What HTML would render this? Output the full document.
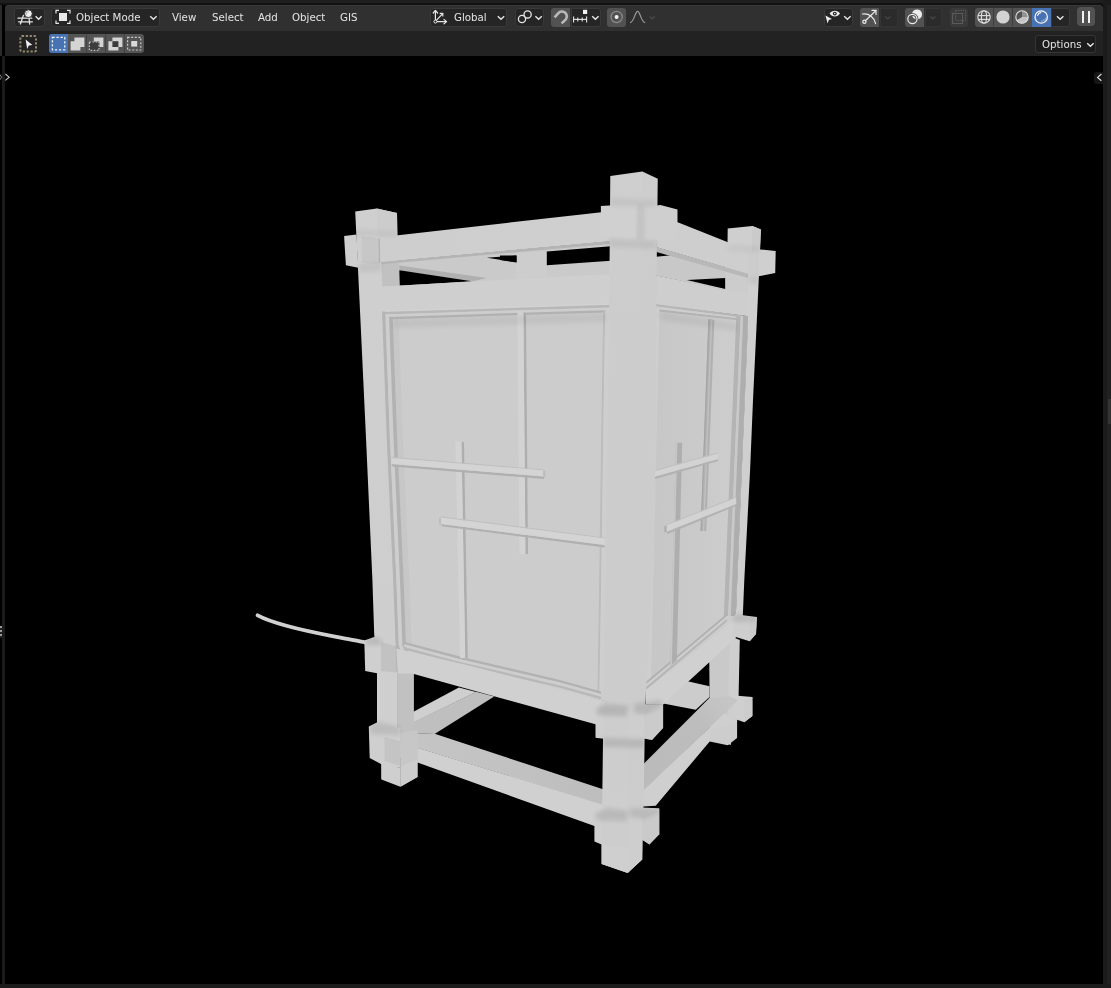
<!DOCTYPE html>
<html lang="en"><head><meta charset="utf-8"><title>Blender viewport</title>
<style>
html,body{margin:0;padding:0;background:#000;}
body{width:1111px;height:988px;overflow:hidden;font-family:"DejaVu Sans","Liberation Sans",sans-serif;font-size:11px;color:#e2e2e2;}
#app{position:relative;width:1111px;height:988px;background:#000;overflow:hidden;}
svg.scene{position:absolute;left:0;top:0;}
.abs{position:absolute;}
/* window chrome */
#topstrip{left:0;top:0;width:1111px;height:2.5px;background:#1f1f1f;}
#topline{left:0;top:2.5px;width:1111px;height:2.5px;background:#121212;}
#hdr{left:5px;top:4.5px;width:1098px;height:26px;background:#303030;border-radius:4px 4px 0 0;box-shadow:0 1px 0 #383838 inset;}
#hdr2{left:5px;top:30.5px;width:1098px;height:25.5px;background:#222222;}
#leftA{left:0;top:5px;width:2px;height:51px;background:#2a2a2a;}
#leftB{left:2px;top:56px;width:3px;height:929px;background:#1b1b1b;}
#rightA{left:1103px;top:0;width:8px;height:988px;background:#1b1b1b;}
#rightB{left:1107px;top:5px;width:4px;height:983px;background:#212121;}
#rightC{left:1108px;top:399px;width:3px;height:25px;background:#343434;}
#bottomA{left:0;top:984px;width:1111px;height:4px;background:#1c1c1c;}
#vp{left:5px;top:56px;width:1098px;height:928px;border-radius:0 0 4px 4px;background:#000;}
/* header widgets */
.btn{position:absolute;top:7.5px;height:19px;border-radius:3px;background:#252525;box-shadow:0 0 0 1px #393939 inset;}
.btn.lt{background:#525252;box-shadow:none;}
.btn.blue{background:#4772b3;box-shadow:none;}
.t{position:absolute;white-space:nowrap;line-height:13px;font-size:11px;color:#e4e4e4;letter-spacing:0;transform:scaleX(0.93);transform-origin:0 0;}
.ic{position:absolute;overflow:visible;}
.btn.dim{background:#2b2b2b;box-shadow:0 0 0 1px #343434 inset;}

</style></head>
<body>
<div id="app">
<svg class="scene" width="1111" height="988" viewBox="0 0 1111 988">
<defs>
<filter id="soft" x="-5%" y="-5%" width="110%" height="110%"><feGaussianBlur stdDeviation="0.7"/></filter>
<filter id="aoblur" x="-5%" y="-5%" width="110%" height="110%"><feGaussianBlur stdDeviation="2.2"/></filter>

<linearGradient id="gGapL" x1="0" y1="0" x2="0" y2="1"><stop offset="0" stop-color="#cccccc"/><stop offset="1" stop-color="#b8b8b8"/></linearGradient>
<linearGradient id="gGapR" x1="0" y1="0" x2="0" y2="1"><stop offset="0" stop-color="#cacaca"/><stop offset="1" stop-color="#b9b9b9"/></linearGradient>
<linearGradient id="gPostL" x1="0" y1="0" x2="0" y2="1"><stop offset="0" stop-color="#cfcfcf"/><stop offset="1" stop-color="#cecece"/></linearGradient>
<linearGradient id="gPostC" x1="0" y1="0" x2="0" y2="1"><stop offset="0" stop-color="#cfcfcf"/><stop offset="0.2" stop-color="#cccccc"/><stop offset="0.75" stop-color="#cccccc"/><stop offset="1" stop-color="#cfcfcf"/></linearGradient>
<linearGradient id="gBeamF" x1="0" y1="0" x2="1" y2="0"><stop offset="0" stop-color="#cecece"/><stop offset="1" stop-color="#cfcfcf"/></linearGradient>
<linearGradient id="gPaperL" x1="0" y1="0" x2="0" y2="1"><stop offset="0" stop-color="#cdcdcd"/><stop offset="1" stop-color="#cbcbcb"/></linearGradient>
<linearGradient id="gLowF" gradientUnits="userSpaceOnUse" x1="400" y1="0" x2="603" y2="0"><stop offset="0" stop-color="#c5c5c5"/><stop offset="0.5" stop-color="#c2c2c2"/><stop offset="1" stop-color="#bdbdbd"/></linearGradient>
<linearGradient id="gLowR" gradientUnits="userSpaceOnUse" x1="650" y1="770" x2="725" y2="700"><stop offset="0" stop-color="#bbbbbb"/><stop offset="0.65" stop-color="#bdbdbd"/><stop offset="1" stop-color="#c5c5c5"/></linearGradient>
<linearGradient id="gPaperR" x1="0" y1="0" x2="1" y2="0"><stop offset="0" stop-color="#c6c6c6"/><stop offset="1" stop-color="#cecece"/></linearGradient>
</defs><g filter="url(#soft)">
<polygon points="381,262 611,241 611,275 382,287" fill="#cacaca"/>
<polygon points="399.4,265.6 487,278 472.2,281.4 399.4,270.6" fill="#b0b0b0"/>
<polygon points="516.5,253 547,251.5 547,277 516.5,279" fill="#cdcdcd"/>
<polygon points="399.4,270.2 472,281.2 399.4,285.8" fill="#000"/>
<polygon points="486.8,257.8 516.5,255.6 516.5,262.3" fill="#000"/>
<polygon points="546.8,251.6 611,246.2 611,260.8 546.8,265.3" fill="#000"/>
<polygon points="500,255.4 516.5,255.4 516.5,262.6 500,259.9" fill="#000"/>
<polygon points="656,247 748,273.6 748,295 656,275.5" fill="#c8c8c8"/>
<polygon points="686.7,279.9 725.4,278.1 725.4,288.9" fill="#000"/>
<polygon points="656,250.2 674,254.9 656,256.7" fill="#000"/>
<polygon points="725.4,262 748,262 748,296 725.4,292" fill="#cccccc"/>
<polygon points="687.6,681.3 709.5,686.3 709.5,697.1 695.7,709.7 663.2,703.4" fill="#cccccc"/>
<polygon points="413,712 458.9,687.4 476,692 413,723" fill="#cfcfcf"/>
<polygon points="413,722.5 476,691.8 494.2,696.5 434.6,734 413,733" fill="#bfbfbf"/>
<polygon points="709.2,655 709.2,640 731,636 731,745 710,738" fill="#c9c9c9"/>
<polygon points="730,636 739.8,640 738.5,700 737.1,722 737.1,738 728.1,744.9 728.1,700" fill="#cecece"/>
<polygon points="731.7,695.3 752.4,697.1 752.4,716 744.3,722.3 735,719" fill="#cfcfcf"/>
<polygon points="744.3,700 752.4,697.1 752.4,716 744.3,722.3" fill="#cccccc"/>
<polygon points="643,764.5 709.4,698.1 729,696.3 738,700 724.5,713.6 643,790.8" fill="url(#gLowR)"/>
<polygon points="643,790.2 724.3,713.4 737,720.5 737,724 709.7,741.5 655.7,805.8 643,806.5" fill="#cfcfcf"/>
<polygon points="709.7,741.5 711,730 737,722 736.8,737 727.7,745.3" fill="#cdcdcd"/>
<polygon points="398,732.5 434.6,733.7 603,789.2 603,805 398,742" fill="url(#gLowF)"/>
<polygon points="398,741.8 603,804.6 603,828.5 594.4,826 417.5,762.5 398,757" fill="#d0d0d0"/>
<polygon points="355.2,211.6 376.8,208.6 397,213.1 397.5,240 399.4,286 398,650 397.7,673 397.7,742 381.4,779.6 381.4,764 377,724 377,673 374.2,634 372.4,580 366.1,440 359.5,300" fill="url(#gPostL)"/>
<polygon points="376.8,208.6 397,213.1 397.3,238 377.5,240" fill="#cccccc"/>
<polygon points="377,672 397.7,672 397.7,745 381,745 377,724" fill="#cfcfcf"/>
<polygon points="397.7,672 413.9,673.5 413.9,727 417.5,745 417.5,776.9 400.4,786.8 400.4,745 397.7,742" fill="#c1c1c1"/>
<polygon points="381.4,762 400.4,768 400.4,786.8 381.4,779.6" fill="#cfcfcf"/>
<polygon points="400.4,766 417.5,759 417.5,776.9 400.4,786.8" fill="#cdcdcd"/>
<polygon points="344.1,236 356.5,234.4 358.3,267.7 345.9,265.3" fill="#cfcfcf"/>
<polygon points="361.5,236 378.5,238.5 379,264.5 362,262.5" fill="#c4c4c4" opacity="0.8"/>
<line x1="379.2" y1="239.0" x2="379.6" y2="263.0" stroke="#b4b4b4" stroke-width="1.40"/>
<polygon points="364.3,640.4 374,637 381,640 381,674 365.2,671" fill="#cfcfcf"/>
<polygon points="381,642 396,646 397,672.5 381,671" fill="#c0c0c0" opacity="0.85"/>
<line x1="396.4" y1="646.0" x2="397.4" y2="672.0" stroke="#b2b2b2" stroke-width="1.80"/>
<polygon points="368.8,726.5 377.8,722 400.4,728 400.4,768 381.4,764.3 369.7,758" fill="#cfcfcf"/>
<polygon points="384.5,737 400.4,741 400.4,766 384.5,761" fill="#c2c2c2" opacity="0.85"/>
<polygon points="400.4,733 417.5,730 417.5,759 400.4,766" fill="#c7c7c7"/>
<polygon points="381.4,262 398.8,263 399.4,286 382.3,287" fill="#c1c1c1"/>
<polygon points="380.5,237.2 601.5,212.2 611,211.2 611,241.2 381.4,262.3" fill="url(#gBeamF)"/>
<polygon points="381.4,262.1 611,241.1 611,243.9 381.4,264.3" fill="#b4b4b4"/>
<polygon points="672,221.5 677.7,222.2 748,250.2 748,273.8 656.5,247.3 656.5,240" fill="#cecece"/>
<polygon points="656.5,247.3 748,273.8 748,278 656.5,252" fill="#b8b8b8"/>
<polygon points="383,308 613,303 608,702 397.7,651" fill="#cccccc"/>
<polygon points="392.5,311.0 397.2,440.0 403.6,580.0 406.0,645.0 408.1,651.0 413.7,651.0 411.6,645.0 409.2,580.0 402.8,440.0 398.1,311.0" fill="#c2c2c2" opacity="0.5"/>
<polygon points="382.3,286.4 613,273.8 613,304.2 383.2,311.2" fill="#cfcfcf"/>
<polygon points="382.5,310.4 613.0,303.2 613.0,304.8 382.5,312.0" fill="#d2d2d2"/>
<polygon points="382.5,312.0 613.0,304.8 613.0,307.4 382.5,314.6" fill="#b8b8b8"/>
<polygon points="382.5,314.6 613.0,307.4 613.0,310.0 382.5,317.2" fill="#cecece"/>
<polygon points="382.5,317.2 613.0,310.0 613.0,312.2 382.5,319.4" fill="#b4b4b4"/>
<polygon points="382.1,311.6 386.8,440.0 393.2,580.0 395.6,645.0 397.7,651.0 400.9,651.0 398.8,645.0 396.4,580.0 390.0,440.0 385.3,311.6" fill="#b4b4b4"/>
<polygon points="385.4,314.3 390.0,440.0 396.4,580.0 398.8,645.0 400.9,651.0 404.5,651.0 402.4,645.0 400.0,580.0 393.6,440.0 389.0,314.3" fill="#cecece"/>
<polygon points="389.1,316.8 393.6,440.0 400.0,580.0 402.4,645.0 404.5,651.0 408.1,651.0 406.0,645.0 403.6,580.0 397.2,440.0 392.7,316.8" fill="#b2b2b2"/>
<polygon points="603.2,310.0 601.8,400.0 600.1,520.0 597.5,694.0 599.5,694.0 602.1,520.0 603.8,400.0 605.2,310.0" fill="#bcbcbc"/>
<polygon points="605.2,310.0 603.8,400.0 602.1,520.0 599.5,694.0 604.4,694.0 607.0,520.0 608.7,400.0 610.1,310.0" fill="#cecece"/>
<polygon points="404.0,641.7 459.1,656.3 560.0,680.0 601.0,691.4 601.0,694.0 560.0,682.6 459.1,658.9 404.0,644.3" fill="#b2b2b2"/>
<polygon points="404.0,644.3 459.1,658.9 560.0,682.6 601.0,694.0 601.0,696.8 560.0,685.4 459.1,661.7 404.0,647.1" fill="#cecece"/>
<polygon points="404.0,647.1 459.1,661.7 560.0,685.4 601.0,696.8 601.0,699.2 560.0,687.8 459.1,664.1 404.0,649.5" fill="#b8b8b8"/>
<polygon points="396.3,648.4 474.9,667 607,701.4 607,727 595.5,724.3 413.9,673.9 397.7,673.3" fill="#d0d0d0"/>
<polygon points="523.4,312.0 526.0,313.0 528.0,554.0 525.4,554.0" fill="#aeaeae"/>
<polygon points="517.4,312.0 523.4,312.0 525.4,554.0 519.4,554.0" fill="#d3d3d3"/>
<polygon points="461.4,441.4 464.0,442.4 467.8,658.0 465.2,658.0" fill="#aeaeae"/>
<polygon points="455.4,441.4 461.4,441.4 465.2,658.0 460.0,658.0" fill="#d3d3d3"/>
<polygon points="391.4,456.8 544.1,469.4 544.1,470.6 391.4,458.0" fill="#c0c0c0"/>
<polygon points="391.4,464.0 544.1,476.6 544.1,479.0 392.4,466.4" fill="#b0b0b0"/>
<polygon points="391.4,458.0 544.1,470.6 544.1,476.6 391.4,464.0" fill="#d4d4d4"/>
<polygon points="440.9,516.3 604.5,537.4 604.5,538.6 440.9,517.5" fill="#c0c0c0"/>
<polygon points="440.9,523.9 604.5,545.0 604.5,547.4 441.9,526.3" fill="#b0b0b0"/>
<polygon points="440.9,517.5 604.5,538.6 604.5,545.0 440.9,523.9" fill="#d4d4d4"/>
<polygon points="543.2,470.6 545.2,470.9 545.2,477.4 543.2,476.6" fill="#bababa"/>
<polygon points="440.9,517.5 439,518.2 439,524.6 440.9,523.9" fill="#bcbcbc"/>
<polygon points="655.0,303.0 748.2,316.5 743.0,440.0 736.4,600.0 735.3,626.0 646.0,692.0 650.0,600.0 654.0,440.0" fill="url(#gPaperR)"/>
<polygon points="655.9,275.2 748,294.3 748,316.2 655.1,304.2" fill="#cecece"/>
<polygon points="654.6,304.0 747.7,316.1 747.7,318.3 654.6,306.2" fill="#b6b6b6"/>
<polygon points="654.6,306.2 747.7,318.3 747.7,321.1 654.6,309.0" fill="#cecece"/>
<polygon points="654.6,309.0 747.7,319.3 747.7,321.3 654.6,311.0" fill="#b4b4b4"/>
<polygon points="736.3,316.0 731.1,440.0 723.8,616.0 728.2,616.0 735.5,440.0 740.7,316.0" fill="#b4b4b4"/>
<polygon points="740.7,316.0 735.5,440.0 728.2,616.0 730.7,616.0 738.0,440.0 743.2,316.0" fill="#c9c9c9"/>
<polygon points="743.2,316.0 738.0,440.0 730.7,616.0 735.9,616.0 743.2,440.0 748.4,316.0" fill="#aeaeae"/>
<polygon points="654,308 659.5,309 651,683 645,692 649,600 653,440" fill="#cecece"/>
<polygon points="646.0,681.8 727.0,613.5 727.0,615.9 646.0,684.2" fill="#b0b0b0"/>
<polygon points="646.0,684.2 727.0,615.9 727.0,618.9 646.0,687.2" fill="#cdcdcd"/>
<polygon points="646.0,687.2 727.0,618.9 727.0,621.3 646.0,689.6" fill="#b4b4b4"/>
<polygon points="646,690 731.3,621.8 735.6,621 735.8,638 663,704.7 646,704.5" fill="#d0d0d0"/>
<polygon points="708.4,319 714.4,320 706.2,531 700.6,531" fill="#b0b0b0"/>
<line x1="708.9" y1="319.5" x2="701.0" y2="531.0" stroke="#a4a4a4" stroke-width="1.00"/>
<line x1="711.6" y1="320.0" x2="703.6" y2="531.0" stroke="#c0c0c0" stroke-width="1.40"/>
<polygon points="675.9,442.7 682.2,442.7 676.8,660.5 670.2,666" fill="#aeaeae"/>
<line x1="676.6" y1="442.7" x2="671.0" y2="665.0" stroke="#c7c7c7" stroke-width="1.60"/>
<polygon points="650.6,471.2 718.2,452.3 718.2,453.5 650.6,472.4" fill="#c0c0c0"/>
<polygon points="650.6,477.8 718.2,458.9 718.2,461.1 651.6,480.0" fill="#b2b2b2"/>
<polygon points="650.6,472.4 718.2,453.5 718.2,458.9 650.6,477.8" fill="#d3d3d3"/>
<polygon points="666.5,524.4 736.2,496.5 736.2,497.7 666.5,525.6" fill="#c0c0c0"/>
<polygon points="666.5,531.8 736.2,503.9 736.2,506.1 667.5,534.0" fill="#b2b2b2"/>
<polygon points="666.5,525.6 736.2,497.7 736.2,503.9 666.5,531.8" fill="#d3d3d3"/>
<polygon points="666.5,525.6 664.4,526 664.4,532.6 666.5,531.8" fill="#acacac"/>
<polygon points="727.7,228.6 752.4,225.9 760.9,229.5 759.6,262 757.8,300 753,400 750.1,470 744.3,580 742.8,616 735.8,616 736.4,600 743,440 748,320 748,251 727.4,251" fill="#cfcfcf"/>
<polygon points="752.4,225.9 760.9,229.5 759.8,252 752,251" fill="#cacaca"/>
<polygon points="758.7,249.3 775.7,251 775.2,273 758.7,276.3" fill="#cfcfcf"/>
<polygon points="748,250 759,250.2 759,276.3 748,274" fill="#cccccc"/>
<polygon points="732.6,618.7 735.3,614.2 756.9,616.9 756,634 749.7,641.3 732.6,635.9" fill="#cecece"/>
<polygon points="749.7,620.5 756.9,616.9 756,634 749.7,641.3" fill="#cbcbcb"/>
<polygon points="610.3,176.1 642.3,171.6 657.7,178.8 655.9,328 655,478 651,600 646,690 644.5,740 644,780 642.2,859.5 627.7,873.1 601.6,864 601.6,844 602.5,780 603,740 603.6,690 606.3,520 608,400 609,328" fill="url(#gPostC)"/>
<polygon points="642.3,171.6 657.7,178.8 655.9,328 655,478 651,600 646,690 644,780 642.2,859.5 627.7,873.1 627.7,780 633,600 638,400 641,300" fill="#cbcbcb" opacity="0.25"/>
<polygon points="600.9,205.9 637.8,203.7 636,238.8 600.9,235.8" fill="#d0d0d0"/>
<polygon points="637.8,203.7 644.1,207.3 644.1,239.2 636,238.8" fill="#cccccc"/>
<polygon points="644.1,207.3 660.4,205 677.5,209.5 677.5,222 673,241 644.1,239.2" fill="#cfcfcf"/>
<polygon points="595.5,710 603.6,704.5 628,709.5 628,742 603.6,738.8 595.5,737.7" fill="#cfcfcf"/>
<polygon points="603.6,712 628,716 628,742 603.6,738.8" fill="#cccccc" opacity="0.7"/>
<polygon points="628,709.5 634.2,704.3 663.1,704.3 663.1,728 652,739.9 644.1,738.6 628,742" fill="#cecece"/>
<polygon points="644.1,712 663.1,706 663.1,728 652,739.9 644.1,738.6" fill="#cacaca" opacity="0.6"/>
<polygon points="594.4,814.5 607,808.2 628,812 628,848 601.6,844.4 594.4,841.5" fill="#cfcfcf"/>
<polygon points="601.6,818 628,822 628,848 601.6,844.4" fill="#cccccc" opacity="0.7"/>
<polygon points="628,812 634,807.3 659.3,808.2 659.3,834.3 649.4,844.4 642.2,839.7 628,848" fill="#cecece"/>
<polygon points="642.2,816 659.3,810 659.3,834.3 649.4,844.4 642.2,839.7" fill="#c9c9c9" opacity="0.7"/>
<polygon points="601.6,844.2 627.7,848 627.7,873.1 601.6,864" fill="#cfcfcf"/>
<polygon points="627.7,848 642.2,839.7 642.2,859.5 627.7,873.1" fill="#cecece"/>
<path d="M257.6,615.4 C270,622 300,630 333.7,636.3 S358,641 365,642.3" fill="none" stroke="#d1d1d1" stroke-width="3.9" stroke-linecap="round"/>
</g>
<g filter="url(#aoblur)">
<polygon points="611,198 656,200 656,207 611,206" fill="#000" opacity="0.05"/>
<polygon points="637,204 645,206 645,240 637,240" fill="#000" opacity="0.04"/>
<polygon points="609,239 656,241 656,249 609,247" fill="#000" opacity="0.06"/>
<polygon points="356,229 397,231 397,237 356,236" fill="#000" opacity="0.04"/>
<polygon points="358,264 381,263 381,271 358,272" fill="#000" opacity="0.06"/>
<polygon points="728,245 760,246 760,252 728,251" fill="#000" opacity="0.04"/>
<polygon points="749,276 759,277 759,284 749,283" fill="#000" opacity="0.06"/>
<polygon points="596,709 604,704 628,706 627,716 598,715" fill="#000" opacity="0.12"/>
<polygon points="634,704 661,700 663,705 646,714 634,713" fill="#000" opacity="0.11"/>
<polygon points="595,814 607,808 628,811 627,821 597,820" fill="#000" opacity="0.10"/>
<polygon points="630,808 659,808 659,812 644,819 630,817" fill="#000" opacity="0.09"/>
<polygon points="365,640 374,637 381,639 381,645 366,645" fill="#000" opacity="0.10"/>
<polygon points="369,727 378,722 400,727 400,735 371,734" fill="#000" opacity="0.09"/>
<polygon points="733,618 736,614 757,617 756,621 734,622" fill="#000" opacity="0.10"/>
<polygon points="603,738 644,739 644,748 603,747" fill="#000" opacity="0.10"/>
<polygon points="394,319 606,313 606,322 394,328" fill="#000" opacity="0.05"/>
<polygon points="660,312 737,323 737,331 660,320" fill="#000" opacity="0.05"/>
</g></svg>
<!-- window chrome -->
<div class="abs" id="topstrip"></div>
<div class="abs" id="topline"></div>
<div class="abs" id="hdr"></div>
<div class="abs" id="hdr2"></div>
<div class="abs" id="leftA"></div>
<div class="abs" id="leftB"></div>
<div class="abs" id="rightA"></div>
<div class="abs" id="rightB"></div>
<div class="abs" id="rightC"></div>
<div class="abs" id="bottomA"></div>

<!-- ROW 1 : editor type -->
<div class="btn" style="left:14px;width:31px;"></div>
<svg class="ic" style="left:14px;top:8px" width="31" height="18" viewBox="14 8 31 18">
  <g stroke="#e6e6e6" stroke-width="1.3" fill="none" stroke-linecap="round">
    <line x1="18" y1="18.2" x2="31.8" y2="18.2"/><line x1="18.6" y1="21.8" x2="32.4" y2="21.8"/>
    <line x1="23.4" y1="15.4" x2="20.4" y2="24"/><line x1="29" y1="17" x2="29.6" y2="24"/>
  </g>
  <circle cx="28.4" cy="13.7" r="3.9" fill="#eeeeee" stroke="#262626" stroke-width="0.9"/>
  <path d="M26.2,14.6 A2.6,2.6 0 0 1 28.6,11.6" stroke="#9a9a9a" stroke-width="0.9" fill="none"/>
  <polyline points="35.6,16.2 38.6,19.2 41.6,16.2" stroke="#e6e6e6" stroke-width="1.4" fill="none"/>
</svg>

<!-- object mode dropdown -->
<div class="btn" style="left:51px;width:109px;"></div>
<svg class="ic" style="left:51px;top:8px" width="24" height="18" viewBox="51 8 24 18">
  <g stroke="#e6e6e6" stroke-width="1.2" fill="none">
    <polyline points="59,10.4 56,10.4 56,13.4"/><polyline points="67,10.4 70,10.4 70,13.4"/>
    <polyline points="56,20.4 56,23.4 59,23.4"/><polyline points="70,20.4 70,23.4 67,23.4"/>
  </g>
  <rect x="59" y="13" width="8" height="8" fill="#e8e8e8"/>
</svg>
<div class="t" style="left:76px;top:10.7px;">Object Mode</div>
<svg class="ic" style="left:148px;top:8px" width="12" height="18" viewBox="148 8 12 18"><polyline points="150.2,16.2 153.4,19.3 156.6,16.2" stroke="#e6e6e6" stroke-width="1.4" fill="none"/></svg>

<!-- menus -->
<div class="t" style="left:172px;top:10.7px;">View</div>
<div class="t" style="left:212px;top:10.7px;">Select</div>
<div class="t" style="left:258px;top:10.7px;">Add</div>
<div class="t" style="left:292px;top:10.7px;">Object</div>
<div class="t" style="left:340px;top:10.7px;">GIS</div>

<!-- orientation -->
<div class="btn" style="left:430px;width:77px;"></div>
<svg class="ic" style="left:430px;top:8px" width="20" height="18" viewBox="430 8 20 18">
  <g stroke="#e6e6e6" stroke-width="1.2" fill="none" stroke-linecap="round" stroke-linejoin="round">
    <line x1="435.4" y1="20.4" x2="435.4" y2="11"/><polyline points="433.2,13 435.4,10.4 437.6,13"/>
    <line x1="436.6" y1="21.6" x2="446" y2="21.6"/><polyline points="444,19.4 446.6,21.6 444,23.8"/>
    <line x1="436.4" y1="20.4" x2="442.6" y2="13.6"/><polyline points="440.2,13.4 442.8,13.4 442.8,16"/>
  </g>
  <circle cx="435.4" cy="21.6" r="1.5" fill="#262626" stroke="#e6e6e6" stroke-width="1"/>
</svg>
<div class="t" style="left:454px;top:10.7px;">Global</div>
<svg class="ic" style="left:495px;top:8px" width="12" height="18" viewBox="495 8 12 18"><polyline points="497.8,16.2 501,19.3 504.2,16.2" stroke="#e6e6e6" stroke-width="1.4" fill="none"/></svg>

<!-- pivot -->
<div class="btn" style="left:515px;width:29px;"></div>
<svg class="ic" style="left:515px;top:8px" width="29" height="18" viewBox="515 8 29 18">
  <g stroke="#e6e6e6" stroke-width="1.3" fill="none">
    <circle cx="522" cy="19" r="3.6"/><circle cx="527.6" cy="14.4" r="3.6"/>
  </g>
  <polyline points="535.4,16.2 538.6,19.3 541.8,16.2" stroke="#e6e6e6" stroke-width="1.4" fill="none"/>
</svg>

<!-- snap -->
<div class="btn lt" style="left:551px;width:19px;border-radius:3px 0 0 3px;"></div>
<svg class="ic" style="left:551px;top:8px" width="19" height="18" viewBox="551 8 19 18">
  <path d="M554.6,17.4 L558.4,13.2 A4.6,4.6 0 0 1 565.6,19.6 L561.6,23.4" stroke="#b9b9b9" stroke-width="2.6" fill="none"/>
  <path d="M556.4,19.2 L560,15.2 A2.3,2.3 0 0 1 563.6,18.2 L559.8,22" stroke="#4e4e4e" stroke-width="0.9" fill="none"/>
</svg>
<div class="btn" style="left:571px;width:30px;border-radius:0 3px 3px 0;"></div>
<svg class="ic" style="left:571px;top:8px" width="30" height="18" viewBox="571 8 30 18">
  <g stroke="#e6e6e6" stroke-width="1.1" fill="none">
    <line x1="573.4" y1="19.4" x2="587" y2="19.4"/>
    <line x1="573.6" y1="16.6" x2="573.6" y2="22.4"/><line x1="577.8" y1="17.4" x2="577.8" y2="21.6"/>
    <line x1="582.2" y1="17.4" x2="582.2" y2="21.6"/><line x1="586.6" y1="16.6" x2="586.6" y2="22.4"/>
  </g>
  <rect x="583" y="9.8" width="4.2" height="4.2" fill="#f0f0f0"/>
  <polyline points="592.2,16.2 595.4,19.3 598.6,16.2" stroke="#e6e6e6" stroke-width="1.4" fill="none"/>
</svg>

<!-- proportional -->
<div class="btn lt" style="left:607px;width:19px;"></div>
<svg class="ic" style="left:607px;top:8px" width="52" height="18" viewBox="607 8 52 18">
  <circle cx="616.6" cy="17" r="5.6" stroke="#8c8c8c" stroke-width="1.2" fill="none"/>
  <circle cx="616.6" cy="17" r="2" fill="#f2f2f2"/>
  <path d="M630,22.6 C634,22.6 635,11.4 637.6,11.4 C640.2,11.4 641.2,22.6 645.2,22.6" stroke="#9a9a9a" stroke-width="1.2" fill="none"/>
  <polyline points="649.6,16.4 652.2,18.8 654.8,16.4" stroke="#4a4a4a" stroke-width="1.3" fill="none"/>
</svg>

<!-- visibility -->
<div class="btn" style="left:824px;width:29px;"></div>
<svg class="ic" style="left:824px;top:8px" width="29" height="18" viewBox="824 8 29 18">
  <path d="M829.6,13.6 C832,9.8 837.6,9.8 840,13.6 C837.6,17.4 832,17.4 829.6,13.6 Z" fill="#ececec"/>
  <circle cx="834.8" cy="13.6" r="1.9" fill="#1c1c1c"/><circle cx="834.8" cy="13.6" r="0.8" fill="#ececec"/>
  <path d="M825.4,15.6 L832,19 L828.8,20 L827.6,23.6 Z" fill="#ececec"/>
  <polyline points="844.2,16.2 847.4,19.3 850.6,16.2" stroke="#e6e6e6" stroke-width="1.4" fill="none"/>
</svg>

<!-- gizmo -->
<div class="btn lt" style="left:860px;width:19px;border-radius:3px 0 0 3px;"></div>
<div class="btn dim" style="left:880px;width:18px;border-radius:0 3px 3px 0;"></div>
<svg class="ic" style="left:860px;top:8px" width="38" height="18" viewBox="860 8 38 18">
  <g stroke="#ececec" stroke-width="1.2" fill="none" stroke-linecap="round">
    <path d="M862.4,14 C869,13 874,17 875.6,23.6"/>
    <line x1="865.4" y1="20.8" x2="875.8" y2="10.6"/><polyline points="872,10.4 876,10.4 876,14.4"/>
    <circle cx="864.4" cy="21.8" r="1.6"/>
  </g>
  <polyline points="885.2,16.4 887.8,18.8 890.4,16.4" stroke="#454545" stroke-width="1.3" fill="none"/>
</svg>

<!-- overlay -->
<div class="btn lt" style="left:905px;width:19px;border-radius:3px 0 0 3px;"></div>
<div class="btn dim" style="left:925px;width:17px;border-radius:0 3px 3px 0;"></div>
<svg class="ic" style="left:905px;top:8px" width="38" height="18" viewBox="905 8 38 18">
  <circle cx="917" cy="14.4" r="5" fill="#ececec"/>
  <circle cx="912.4" cy="19" r="4.6" stroke="#525252" stroke-width="3" fill="none"/>
  <circle cx="912.4" cy="19" r="4.6" stroke="#ececec" stroke-width="1.2" fill="none"/>
  <polyline points="930.2,16.4 932.8,18.8 935.4,16.4" stroke="#454545" stroke-width="1.3" fill="none"/>
</svg>

<!-- xray -->
<div class="btn" style="left:950px;width:18px;background:#3a3a3a;box-shadow:none;"></div>
<svg class="ic" style="left:950px;top:8px" width="18" height="18" viewBox="950 8 18 18">
  <g stroke="#5e5e5e" stroke-width="1" fill="none"><rect x="952.6" y="13.4" width="10" height="10"/><rect x="955.6" y="10.4" width="10" height="10" stroke-dasharray="1.4 1"/></g>
</svg>

<!-- shading -->
<div class="btn lt" style="left:975px;width:57px;border-radius:3px 0 0 3px;"></div>
<div class="abs" style="left:993px;top:8px;width:1px;height:18px;background:#3c3c3c;"></div>
<div class="abs" style="left:1012px;top:8px;width:1px;height:18px;background:#3c3c3c;"></div>
<div class="btn blue" style="left:1032px;width:19px;border-radius:0;"></div>
<div class="btn" style="left:1051px;width:19px;border-radius:0 3px 3px 0;"></div>
<svg class="ic" style="left:975px;top:8px" width="95" height="18" viewBox="975 8 95 18">
  <g stroke="#e0e0e0" stroke-width="1.1" fill="none">
    <circle cx="984" cy="17" r="6.2"/><ellipse cx="984" cy="17" rx="2.6" ry="6.2"/><line x1="977.8" y1="15.6" x2="990.2" y2="15.6"/><line x1="978.2" y1="19.4" x2="989.8" y2="19.4"/>
  </g>
  <circle cx="1003" cy="17" r="6.6" fill="#d2d2d2"/>
  <circle cx="1022" cy="17" r="6.2" stroke="#e0e0e0" stroke-width="1.1" fill="none"/>
  <path d="M1022,17 L1022,10.8 A6.2,6.2 0 0 1 1028.2,17 Z" fill="#e0e0e0" opacity="0.45"/>
  <path d="M1022,17 L1028.2,17 A6.2,6.2 0 0 1 1016.6,20.2 Z" fill="#e0e0e0" opacity="0.8"/>
  <circle cx="1041.2" cy="17" r="6.2" stroke="#f4f4f4" stroke-width="1.3" fill="none"/>
  <path d="M1037.6,15.4 A4,4 0 0 1 1040.8,12.6" stroke="#f4f4f4" stroke-width="1.2" fill="none" stroke-linecap="round"/>
  <g stroke="#c8d6ee" stroke-width="0.7"><line x1="1042" y1="22" x2="1042" y2="20"/><line x1="1044" y1="21.2" x2="1044" y2="19"/><line x1="1045.8" y1="19.6" x2="1045.8" y2="17.6"/></g>
  <polyline points="1057,16.2 1060.2,19.3 1063.4,16.2" stroke="#e6e6e6" stroke-width="1.4" fill="none"/>
</svg>

<!-- pause -->
<div class="btn lt" style="left:1077px;top:7px;width:18px;height:19px;border-radius:4px;"></div>
<div class="abs" style="left:1082px;top:11px;width:2px;height:12px;background:#f2f2f2;"></div>
<div class="abs" style="left:1088px;top:11px;width:2px;height:12px;background:#f2f2f2;"></div>

<!-- ROW 2 : tool + select modes -->
<svg class="ic" style="left:17px;top:33px" width="24" height="22" viewBox="17 33 24 22">
  <rect x="20.4" y="36" width="15.6" height="15.6" rx="1.5" fill="none" stroke="#958a70" stroke-width="2" stroke-dasharray="2.2 1.7"/>
  <path d="M25.6,39.6 L32.4,45 L28.8,45.6 L27.2,49 Z" fill="#f0f0f0"/>
</svg>
<div class="abs" style="left:49px;top:34px;width:95px;height:19px;background:#545454;border-radius:3px;"></div>
<div class="abs" style="left:49px;top:34px;width:19px;height:19px;background:#4772b3;border-radius:3px 0 0 3px;"></div>
<div class="abs" style="left:86px;top:34px;width:1px;height:19px;background:#424242;"></div>
<div class="abs" style="left:105px;top:34px;width:1px;height:19px;background:#424242;"></div>
<div class="abs" style="left:124px;top:34px;width:1px;height:19px;background:#424242;"></div>
<svg class="ic" style="left:49px;top:34px" width="95" height="19" viewBox="49 34 95 19">
  <rect x="52.4" y="37.4" width="12.4" height="12.4" fill="none" stroke="#f4f4f4" stroke-width="1.3" stroke-dasharray="2.3 1.75"/>
  <path d="M74.4,37.6 h10 v9.4 h-4 v3.6 h-9.8 v-9.4 h3.8 Z" fill="#d4d4d4"/>
  <path d="M93.8,37.6 h9.6 v9.4 h-3.8 v-5.6 h-5.8 Z" fill="#d4d4d4"/>
  <rect x="89.4" y="42" width="9.6" height="8.4" fill="#3c3c3c" stroke="#c4c4c4" stroke-width="1.2" stroke-dasharray="1.6 1.5"/>
  <path d="M112.4,37.6 h10 v9.4 h-4 v3.6 h-10 v-9.4 h4 Z" fill="#d4d4d4"/>
  <rect x="112.4" y="41.2" width="6" height="5.8" fill="#3a3a3a"/>
  <rect x="127.6" y="37.4" width="13.2" height="12.6" fill="none" stroke="#c8c8c8" stroke-width="1.2" stroke-dasharray="2 1.6"/>
  <rect x="131.2" y="41" width="6" height="5.6" fill="#dadada"/>
</svg>

<!-- options -->
<div class="btn" style="left:1035px;top:34.5px;width:61px;height:18.5px;background:#1c1c1c;box-shadow:0 0 0 1px #343434 inset;"></div>
<div class="t" style="left:1042px;top:37.7px;">Options</div>
<svg class="ic" style="left:1084px;top:35px" width="12" height="18" viewBox="1084 35 12 18"><polyline points="1087.2,43.2 1090.4,46.3 1093.6,43.2" stroke="#e6e6e6" stroke-width="1.4" fill="none"/></svg>

<!-- region toggle arrows -->
<svg class="ic" style="left:0;top:70px" width="14" height="14" viewBox="0 70 14 14"><polyline points="5.4,74 9.2,77.2 5.4,80.4" stroke="#c8c8c8" stroke-width="1.1" fill="none"/><polyline points="0,74.6 1.6,77.2 0,79.8" stroke="#8a8a8a" stroke-width="1" fill="none"/></svg>
<div class="abs" style="left:1094px;top:72px;width:9px;height:12px;background:#161616;border-radius:3px 0 0 3px;"></div>
<svg class="ic" style="left:1092px;top:70px" width="14" height="14" viewBox="1092 70 14 14"><polyline points="1101.4,74 1097.6,77.4 1101.4,80.8" stroke="#dcdcdc" stroke-width="1.2" fill="none"/></svg>
<!-- neighbour sliver on far left -->
<div class="abs" style="left:0;top:626px;width:2px;height:12px;background:repeating-linear-gradient(#9a9a9a 0 2px,#222 2px 4px);"></div>
<div class="abs" style="left:0;top:600px;width:2px;height:70px;background:#1e1e1e;z-index:-1;"></div>

</div>
</body></html>
